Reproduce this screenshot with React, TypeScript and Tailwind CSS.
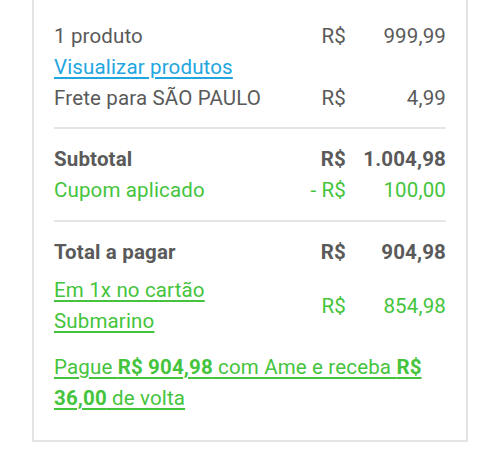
export default function App() {
  return (
    <div className="w-[500px] h-[460px] bg-white" style={{ fontFamily: "Roboto, 'Liberation Sans', sans-serif" }}>
      <div className="ml-[32px] w-[436px] border-2 border-t-0 border-[#e3e3e3] px-[20px] pt-[21px] pb-[26px] text-[20.5px] leading-[31px] tracking-[0.15px] text-[#5a5a5a]">
        <div className="flex">
          <span className="flex-1">1 produto</span>
          <span className="text-right">R$</span>
          <span className="w-[100px] text-right">999,99</span>
        </div>
        <a className="block text-[#22a6df] underline underline-offset-[3px]">Visualizar produtos</a>
        <div className="flex">
          <span className="flex-1">Frete para SÃO PAULO</span>
          <span>R$</span>
          <span className="w-[100px] text-right">4,99</span>
        </div>

        <div className="h-[2px] bg-[#e6e6e6] mt-[13px] mb-[15px]" />

        <div className="flex font-bold">
          <span className="flex-1">Subtotal</span>
          <span>R$</span>
          <span className="w-[100px] text-right">1.004,98</span>
        </div>
        <div className="flex text-[#44c43c]">
          <span className="flex-1">Cupom aplicado</span>
          <span>- R$</span>
          <span className="w-[100px] text-right">100,00</span>
        </div>

        <div className="h-[2px] bg-[#e6e6e6] mt-[14px] mb-[15px]" />

        <div className="flex font-bold">
          <span className="flex-1">Total a pagar</span>
          <span>R$</span>
          <span className="w-[100px] text-right">904,98</span>
        </div>
        <div className="flex items-center mt-[7px] text-[#44c43c]">
          <a className="flex-1 underline underline-offset-[3px]">
            Em 1x no cartão
            <br />
            Submarino
          </a>
          <span>R$</span>
          <span className="w-[100px] text-right">854,98</span>
        </div>

        <p className="mt-[15px] pr-[12px] text-[#44c43c] underline underline-offset-[3px]">
          Pague <b>R$ 904,98</b> com Ame e receba <b>R$ 36,00</b> de volta
        </p>
      </div>
    </div>
  )
}
